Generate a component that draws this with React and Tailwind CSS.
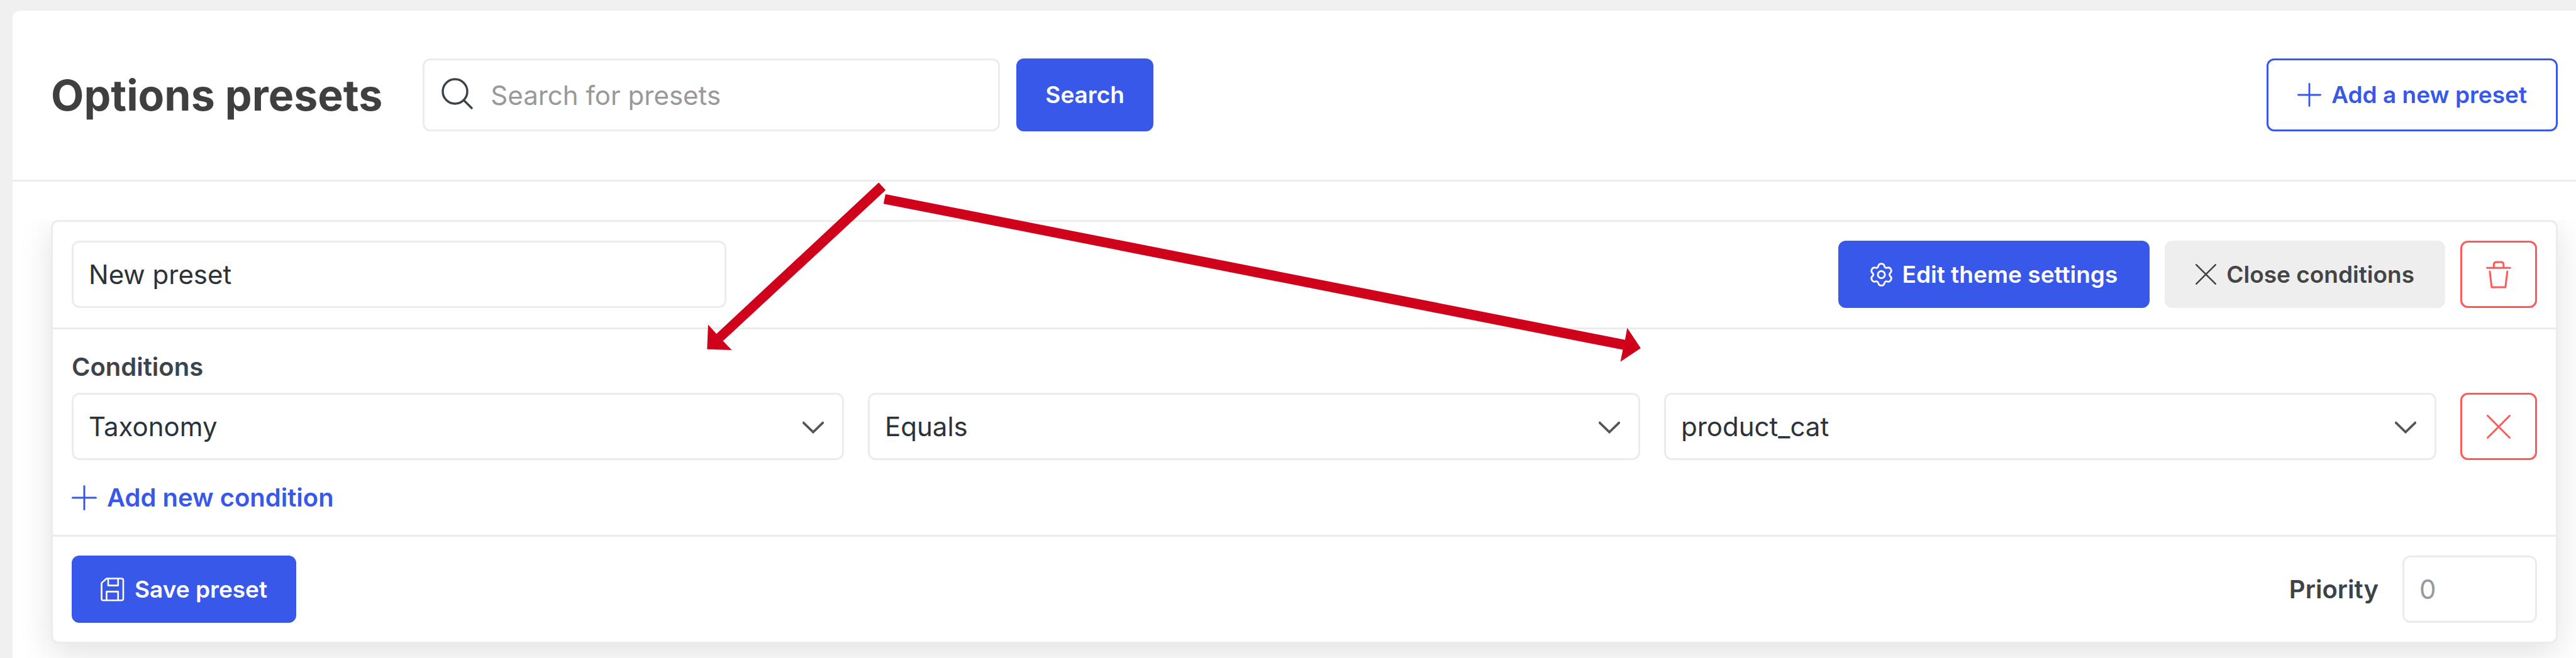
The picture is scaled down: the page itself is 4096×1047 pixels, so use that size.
import { useState } from 'react';

const FIELD = 'h-[107px] rounded-xl border-3 border-[#ececec] bg-white px-6 text-[42px] text-[#2c3338] placeholder:text-[#999999] placeholder:opacity-100 outline-none';
const BUTTON = 'flex items-center justify-center gap-4 rounded-xl border-3 text-[37px] font-semibold cursor-pointer whitespace-nowrap';

function SearchIcon({ className }) {
    return (
        <svg className={className} width="50" height="50" viewBox="0 0 50 50" fill="none" stroke="#3c434a" strokeWidth="3.5" strokeLinecap="round">
            <circle cx="21.5" cy="21.5" r="19.5" />
            <path d="M35.5 35.5 L48 48" />
        </svg>
    );
}

function PlusIcon({ size = 38 }) {
    return (
        <svg width={size} height={size} viewBox="0 0 40 40" fill="none" stroke="currentColor" strokeWidth="3" strokeLinecap="round">
            <path d="M20 1.5 V38.5 M1.5 20 H38.5" />
        </svg>
    );
}

function CrossIcon({ size = 33 }) {
    return (
        <svg width={size} height={size} viewBox="0 0 38 38" fill="none" stroke="currentColor" strokeWidth="3" strokeLinecap="round">
            <path d="M1.5 1.5 L36.5 36.5 M36.5 1.5 L1.5 36.5" />
        </svg>
    );
}

function GearIcon() {
    return (
        <svg width="35" height="38" viewBox="-17.5 -19 35 38" fill="none" stroke="currentColor" strokeWidth="2.8">
            <path d="M0 -17.3 Q4 -17.3 4.85 -13.6 Q5.7 -9.9 9.35 -11 Q13 -12.1 15 -8.65 Q17 -5.2 14.2 -2.6 Q11.4 0 14.2 2.6 Q17 5.2 15 8.65 Q13 12.1 9.35 11 Q5.7 9.9 4.85 13.6 Q4 17.3 0 17.3 Q-4 17.3 -4.85 13.6 Q-5.7 9.9 -9.35 11 Q-13 12.1 -15 8.65 Q-17 5.2 -14.2 2.6 Q-11.4 0 -14.2 -2.6 Q-17 -5.2 -15 -8.65 Q-13 -12.1 -9.35 -11 Q-5.7 -9.9 -4.85 -13.6 Q-4 -17.3 0 -17.3 Z" />
            <circle cx="0" cy="0" r="5.6" />
        </svg>
    );
}

function TrashIcon() {
    return (
        <svg width="40" height="44" viewBox="0 0 40 44" fill="none" stroke="currentColor" strokeWidth="3" strokeLinecap="round" strokeLinejoin="round">
            <path d="M1.5 11.2 H38.2" />
            <path d="M12.4 11 V6 Q12.4 2 16.4 2 H23.8 Q27.8 2 27.8 6 V11" />
            <path d="M5.9 17 L8.9 42 H30.8 L33.8 17" />
        </svg>
    );
}

function SaveIcon() {
    return (
        <svg width="38" height="38" viewBox="0 0 38 38" fill="none" stroke="currentColor" strokeWidth="2.6" strokeLinejoin="round">
            <path d="M9.5 1.5 H33 Q36 1.5 36 4.5 V33.5 Q36 36.3 33 36.3 H4 Q1.5 36.3 1.5 33.5 V8.6 Z" />
            <path d="M12 1.5 V12.6 H27.8 V1.5" />
            <path d="M9.5 36.3 V22.4 H27.8 V36.3" />
        </svg>
    );
}

function ConditionSelect({ label, value }) {
    return (
        <div className="relative min-w-0 flex-1">
            <select aria-label={label} defaultValue={value} className={`${FIELD} w-full appearance-none`}>
                <option value={value}>{value}</option>
            </select>
            <svg className="pointer-events-none absolute right-8 top-[45px]" width="34" height="20" viewBox="0 0 34 20" fill="none" stroke="#555555" strokeWidth="3.8">
                <path d="M0.5 1.5 L17 17.5 L33.5 1.5" />
            </svg>
        </div>
    );
}

// Red arrows pointing from the divider to the condition fields
function Arrows() {
    return (
        <svg className="pointer-events-none absolute left-0 top-0 h-auto w-full" viewBox="0 0 6470 1654" fill="#d0021b">
            <polygon points="2207,459 2224.5,478 1816,857 1838,880 1776,878 1778.5,816 1799.5,839" />
            <polygon points="2224,488 4081.5,854 4087,824 4121,875 4070,909 4076,879 2219,512" />
        </svg>
    );
}

export default function App() {
    const [search, setSearch] = useState('');
    const [name, setName] = useState('New preset');
    const [priority, setPriority] = useState('');

    return (
        <div className="relative flex min-h-screen flex-col overflow-hidden bg-[#f0f0f1] pl-5 pt-[17px] font-['Inter',sans-serif]">
            <main className="flex flex-1 flex-col rounded-tl-xl bg-white">

                {/* Page header */}
                <header className="flex items-center border-b-3 border-[#ececec] pb-[77px] pl-[61px] pr-[29px] pt-[76px]">
                    <h1 className="whitespace-nowrap text-[68px] font-bold leading-[80px] text-[#3f3f3f]">Options presets</h1>
                    <form className="ml-16 flex gap-[26px]" onSubmit={(e) => e.preventDefault()}>
                        <div className="relative">
                            <SearchIcon className="pointer-events-none absolute left-[30px] top-[31px]" />
                            <input
                                type="search"
                                aria-label="Search for presets"
                                placeholder="Search for presets"
                                value={search}
                                onChange={(e) => setSearch(e.target.value)}
                                className="h-[116px] w-[918px] rounded-xl border-3 border-[#ececec] bg-white pl-[105px] pr-6 text-[42px] text-[#2c3338] placeholder:text-[#999999] placeholder:opacity-100 outline-none"
                            />
                        </div>
                        <button type="submit" className={`${BUTTON} h-[116px] border-[#3858e9] bg-[#3858e9] px-[43px] text-white`}>Search</button>
                    </form>
                    <button type="button" className={`${BUTTON} ml-auto h-[116px] border-[#3858e9] bg-white px-[46px] text-[#3858e9]`}>
                        <PlusIcon />
                        Add a new preset
                    </button>
                </header>

                <div className="mt-[61px] flex-1 overflow-hidden pb-[22px] pl-[61px] pr-[29px]">
                    <section className="rounded-xl border-3 border-[#ececec] bg-white shadow-[0_15px_54px_rgba(0,0,0,0.12)]">

                        {/* Preset name and actions */}
                        <div className="flex items-center justify-between border-b-3 border-[#ececec] px-[30px] pb-[31px] pt-[30px]">
                            <input type="text" aria-label="Preset name" value={name} onChange={(e) => setName(e.target.value)} className={`${FIELD} w-[1041px]`} />
                            <div className="flex gap-6">
                                <button type="button" className={`${BUTTON} h-[107px] border-[#3858e9] bg-[#3858e9] px-12 text-white`}>
                                    <GearIcon />
                                    Edit theme settings
                                </button>
                                <button type="button" className={`${BUTTON} h-[107px] border-[#eeeeee] bg-[#eeeeee] px-[46px] text-[#444444]`}>
                                    <CrossIcon />
                                    Close conditions
                                </button>
                                <button type="button" aria-label="Delete preset" className={`${BUTTON} h-[107px] w-[122px] border-[#ff5a5a] bg-white text-[#ff5a5a]`}>
                                    <TrashIcon />
                                </button>
                            </div>
                        </div>

                        {/* Conditions */}
                        <div className="border-b-3 border-[#ececec] px-[30px] pb-[35px] pt-9">
                            <h2 className="text-[40px] font-semibold leading-[48px] text-[#3c434a]">Conditions</h2>
                            <div className="mt-[17px] flex gap-[38px]">
                                <ConditionSelect label="Condition type" value="Taxonomy" />
                                <ConditionSelect label="Comparison" value="Equals" />
                                <ConditionSelect label="Condition value" value="product_cat" />
                                <button type="button" aria-label="Remove condition" className={`${BUTTON} h-[107px] w-[122px] border-[#ff5a5a] bg-white text-[#ff5a5a]`}>
                                    <CrossIcon size={38} />
                                </button>
                            </div>
                            <button type="button" className="mt-9 flex cursor-pointer items-center gap-4 text-[40px] font-semibold leading-[48px] text-[#3858e9]">
                                <PlusIcon size={40} />
                                Add new condition
                            </button>
                        </div>

                        {/* Footer */}
                        <div className="flex items-center justify-between p-[30px]">
                            <button type="button" className={`${BUTTON} h-[107px] border-[#3858e9] bg-[#3858e9] px-[43px] text-white`}>
                                <SaveIcon />
                                Save preset
                            </button>
                            <div className="flex items-center gap-[38px]">
                                <label htmlFor="priority" className="text-[40px] font-semibold text-[#3c434a]">Priority</label>
                                <input id="priority" type="text" inputMode="numeric" placeholder="0" value={priority} onChange={(e) => setPriority(e.target.value)} className={`${FIELD} w-[214px]`} />
                            </div>
                        </div>
                    </section>
                </div>
            </main>
            <Arrows />
        </div>
    );
}
